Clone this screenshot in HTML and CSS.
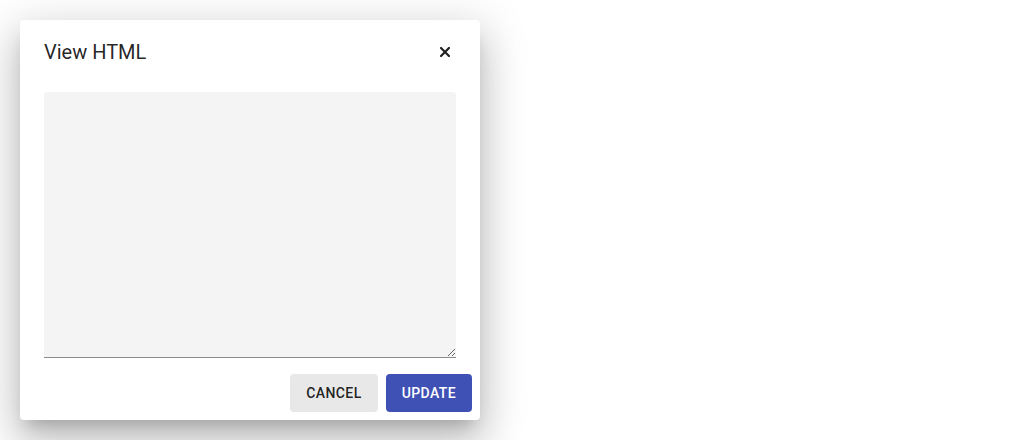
FILE: index.html
```html
<!DOCTYPE html>
<html>
<head>
<meta charset="utf-8">
<link rel="stylesheet" href="styles.css">
</head>
<body>
<div class="dialog">
  <div class="header">
    <h2 class="title">View HTML</h2>
    <button class="close" aria-label="Close">
      <svg width="10" height="10" viewBox="0 0 10 10"><path d="M1 1L9 9M9 1L1 9" stroke="#212121" stroke-width="2.2" stroke-linecap="square"/></svg>
    </button>
  </div>
  <div class="body">
    <textarea class="editor"></textarea>
  </div>
  <div class="actions">
    <button class="btn btn-cancel">Cancel</button>
    <button class="btn btn-update">Update</button>
  </div>
</div>
</body>
</html>
```
FILE: styles.css
```css
html, body {
  margin: 0;
  padding: 0;
  background: #fff;
  font-family: Roboto, "Liberation Sans", sans-serif;
}
.dialog {
  margin: 20px;
  width: 460px;
  height: 400px;
  box-sizing: border-box;
  background: #fff;
  border-radius: 4px;
  box-shadow: 0 11px 15px -7px rgba(0,0,0,.2), 0 24px 38px 3px rgba(0,0,0,.14), 0 9px 46px 8px rgba(0,0,0,.12);
  display: flex;
  flex-direction: column;
}
.header {
  display: flex;
  align-items: center;
  justify-content: space-between;
  padding: 16px 20px 0 24px;
  height: 32px;
}
.title {
  margin: 0;
  font-size: 20px;
  font-weight: 400;
  line-height: 32px;
  color: rgba(0,0,0,.87);
}
.close {
  border: 0;
  background: transparent;
  padding: 0;
  width: 30px;
  height: 30px;
  display: flex;
  align-items: center;
  justify-content: center;
  cursor: pointer;
}
.body {
  padding: 24px 24px 0 24px;
}
.editor {
  display: block;
  width: 100%;
  height: 266px;
  box-sizing: border-box;
  margin: 0;
  border: 0;
  border-bottom: 1px solid #8c8c8c;
  border-radius: 4px 4px 0 0;
  background: #f4f4f4;
  resize: vertical;
  outline: none;
  font-family: Roboto, "Liberation Sans", sans-serif;
}
.actions {
  display: flex;
  justify-content: flex-end;
  gap: 8px;
  padding: 16px 8px 8px 8px;
}
.btn {
  height: 38px;
  padding: 0 16px;
  border: 0;
  border-radius: 4px;
  font-family: Roboto, "Liberation Sans", sans-serif;
  font-size: 14px;
  font-weight: 500;
  letter-spacing: 0.4px;
  text-transform: uppercase;
  cursor: pointer;
}
.btn-cancel {
  background: #e8e8e8;
  color: rgba(0,0,0,.87);
}
.btn-update {
  background: #3f51b5;
  color: #fff;
}
```
